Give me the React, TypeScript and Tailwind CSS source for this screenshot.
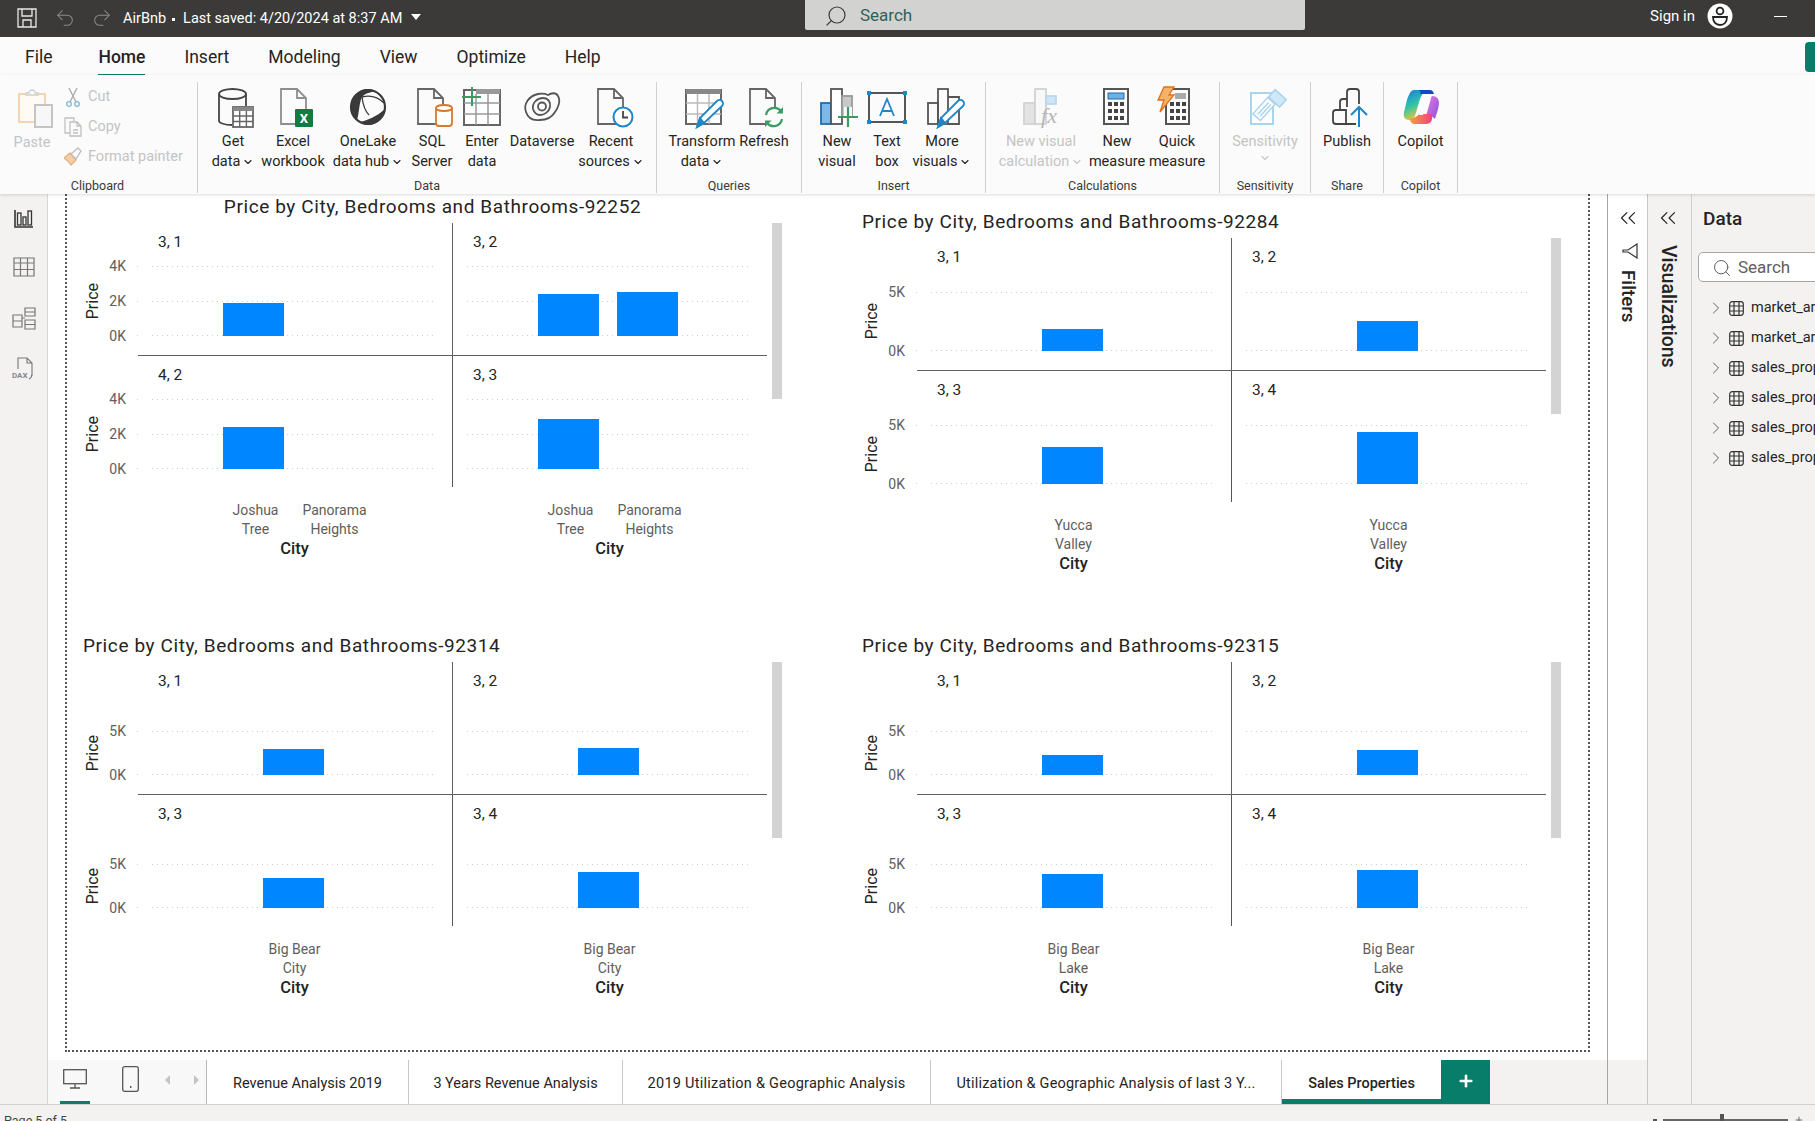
import React from 'react';
import { ChevronDown, ChevronRight, ChevronsLeft, Plus, Redo2, Search, Undo2 } from 'lucide-react';

const ui = "font-['Roboto','Liberation_Sans',sans-serif]";
const din = "font-['Roboto','Liberation_Sans',sans-serif]";

const S = ({ children }: { children: React.ReactNode }) => (
  <svg viewBox="0 0 40 40" className="h-[42px] w-[40px] overflow-visible" fill="none" strokeWidth="1.8">
    {children}
  </svg>
);

const Doc = ({ x = 0, c = '#666' }: { x?: number; c?: string }) => (
  <path transform={`translate(${x} 0)`} d="M8 2h16l9 9v26H8zM24 2v9h9" stroke={c} />
);

const Pencil = ({ x, y }: { x: number; y: number }) => (
  <g transform={`translate(${x} ${y})`}>
    <path d="M0 0l3-9L20-26a3.5 3.5 0 0 1 5 5L7-4z" fill="#fff" stroke="#1f86c8" />
    <path d="M0 0l3-9 4 5z" fill="#1f86c8" stroke="#1f86c8" />
  </g>
);

const GetDataIcon = () => (
  <S>
    <path d="M6 7v27c0 2 6 4 13 4M33 7v12" stroke="#444" />
    <ellipse cx="19.5" cy="7" rx="13.5" ry="5" stroke="#444" />
    <g stroke="#666" strokeWidth="1.4">
      <rect x="20" y="20" width="20" height="20" fill="#fff" strokeWidth="1.8" />
      <path d="M26.7 24v16M33.4 24v16M20 29h20M20 34.500h20" />
    </g>
    <rect x="20" y="20" width="20" height="4" fill="#888" />
  </S>
);

const ExcelIcon = () => (
  <S>
    <Doc c="#8e8e8e" />
    <rect x="22" y="22" width="18" height="18" rx="1" fill="#107c41" />
    <text x="31" y="36" textAnchor="middle" fill="#fff" fontSize="13" fontWeight="700" fontFamily="Roboto">X</text>
  </S>
);

const OneLakeIcon = () => (
  <S>
    <circle cx="20" cy="20" r="17" stroke="#3a3a3a" strokeWidth="2.2" />
    <path d="M18 2C8 4 3 12 3 20c0 6 2 10 6 13 2-5 2-17 5-23 3-4 8-4 12-6-2-2-6-2-8-2z" fill="#3a3a3a" />
    <path d="M12 35c8-2 16-5 25-13-1 8-9 16-17 16-3 0-6-1-8-3z" fill="#3a3a3a" />
    <path d="M14 10c1 8 3 14 7 18M14 10c8-2 16 0 22 6" stroke="#3a3a3a" strokeWidth="1.3" />
  </S>
);

const SqlIcon = () => (
  <S>
    <Doc x={-2} />
    <rect x="24" y="20" width="16" height="19" rx="3" fill="#fff" stroke="#d9792b" />
    <ellipse cx="32" cy="21" rx="8" ry="3" fill="#fff" stroke="#d9792b" />
  </S>
);

const EnterDataIcon = () => (
  <S>
    <rect x="2" y="3" width="36" height="35" fill="#fff" stroke="#666" strokeWidth="2" />
    <path d="M14 7v31M26 7v31M2 16h36M2 27h36" stroke="#999" strokeWidth="1.5" />
    <rect x="14" y="2" width="24" height="5" fill="#999" />
    <path d="M10 0v19M0 10h19" stroke="#3d9a63" strokeWidth="2" />
  </S>
);

const DataverseIcon = () => (
  <S>
    <path d="M4 25C1 17 7 9 16 7c5-1 8 0 10 1 3-2 8-3 10 1 3 5 0 12-3 16-3 5-9 8-15 8-7 1-12-2-14-8z" stroke="#555" />
    <path d="M11 22c-1-6 4-11 10-11 5 0 8 4 7 9-1 5-6 8-10 8-4 0-6-3-7-6z" stroke="#555" />
    <circle cx="20" cy="19.500" r="4" stroke="#555" />
  </S>
);

const RecentIcon = () => (
  <S>
    <Doc x={-1} />
    <circle cx="32" cy="30" r="9.500" fill="#fff" stroke="#1f86c8" strokeWidth="2" />
    <path d="M32 24v6.500h5" stroke="#444" />
  </S>
);

const TransformIcon = () => (
  <S>
    <rect x="4" y="3" width="35" height="34" fill="#fff" stroke="#666" strokeWidth="2" />
    <path d="M15.500 7v30M27 7v30M4 16h35M4 27h35" stroke="#bbb" strokeWidth="1.5" />
    <rect x="4" y="2" width="35" height="5" fill="#888" />
    <Pencil x={15} y={40} />
  </S>
);

const RefreshIcon = () => (
  <S>
    <Doc x={-2} />
    <circle cx="30" cy="30" r="10" fill="#fbfbfb" />
    <path d="M22 28a8.500 8.500 0 0 1 15-4M38 32a8.500 8.500 0 0 1-15 4" stroke="#3d9a63" strokeWidth="2.2" />
    <path d="M39 20v6.500h-6.500zM21 40v-6.500h6.500z" fill="#3d9a63" />
  </S>
);

const NewVisualIcon = () => (
  <S>
    <rect x="4" y="16" width="10" height="21" fill="#7cb9e8" stroke="#1d6fb0" />
    <rect x="14" y="2" width="11" height="35" fill="#fff" stroke="#555" />
    <rect x="25" y="9" width="10" height="21" fill="#c9c9c9" stroke="#999" />
    <rect x="27" y="20" width="8" height="20" fill="#fbfbfb" />
    <path d="M31 20v20M21 30h20" stroke="#3d9a63" strokeWidth="2.200" />
  </S>
);

const TextBoxIcon = () => (
  <S>
    <rect x="2" y="6" width="36" height="29" stroke="#444" />
    {[[0, 4], [36, 4], [0, 33], [36, 33]].map(([x, y]) => (
      <rect key={`${x}-${y}`} x={x} y={y} width="4" height="4" fill="#1f86c8" />
    ))}
    <path d="M13 29l7-17 7 17M15.500 24h9" stroke="#1f86c8" />
  </S>
);

const MoreVisualsIcon = () => (
  <S>
    <rect x="6" y="16" width="10" height="21" stroke="#555" />
    <rect x="16" y="2" width="10" height="35" stroke="#555" />
    <path d="M26 10h11v27H26" stroke="#555" />
    <Pencil x={16} y={40} />
  </S>
);

const VisualCalcIcon = () => (
  <S>
    <rect x="3" y="16" width="11" height="21" fill="#e3e3e3" stroke="#d2d2d2" />
    <rect x="14" y="2" width="11" height="35" fill="#f8f8f8" stroke="#d2d2d2" />
    <rect x="25" y="9" width="10" height="8" fill="#cfe4f5" stroke="#bcd7ee" />
    <text x="28" y="36" textAnchor="middle" fill="#b5b5b5" fontSize="22" fontStyle="italic" fontFamily="Liberation Serif">fx</text>
  </S>
);

const Keys = ({ x, y }: { x: number; y: number }) => (
  <g fill="#444">
    {[0, 7, 14].map((dy) =>
      [0, 6, 12].map((dx) => <rect key={`${dx}-${dy}`} x={x + dx} y={y + dy} width="4" height="4" />)
    )}
  </g>
);

const MeasureIcon = () => (
  <S>
    <rect x="7" y="2" width="24" height="35" stroke="#555" strokeWidth="2" />
    <rect x="11" y="6" width="16" height="6" fill="#6db0e4" stroke="#1f6fb0" strokeWidth="1" />
    <Keys x={11} y={15} />
  </S>
);

const QuickMeasureIcon = () => (
  <S>
    <rect x="9" y="2" width="23" height="35" stroke="#555" strokeWidth="2" />
    <rect x="18" y="6" width="11" height="6" fill="#aaa" />
    <Keys x={13} y={15} />
    <path d="M7 0h10l-5 8h5L3 25l4-12H1z" fill="#f5b26b" stroke="#e0701a" strokeWidth="1.300" />
  </S>
);

const SensitivityIcon = () => (
  <S>
    <path d="M6 6h22v31H6z" stroke="#a9d4ee" fill="#fff" strokeWidth="2" />
    <g transform="rotate(-48 19 22)" stroke="#a9d4ee" strokeWidth="1.500" fill="#fff">
      <rect x="8" y="17" width="22" height="10" />
      <path d="M11 21h16M11 24h16" />
    </g>
    <g transform="rotate(-48 32 11)" stroke="#a9d4ee" strokeWidth="1.500" fill="#cfe8f7">
      <rect x="27" y="4" width="10" height="15" />
    </g>
  </S>
);

const PublishIcon = () => (
  <S>
    <path d="M9 37c-2 0-3-1-3-3V26c0-2 1-3 3-3h10v14zM19 37h10" stroke="#444" />
    <path d="M13 23v-8c0-2 1-3 3-3h4" stroke="#444" />
    <path d="M20 20V5c0-2 1-3 3-3h6c2 0 3 1 3 3v12" stroke="#444" />
    <path d="M32 40V20M24 28l8-8 8 8" stroke="#1f86c8" strokeWidth="2" />
  </S>
);

const CopilotIcon = () => (
  <svg viewBox="0 0 40 40" className="h-[42px] w-[40px] overflow-visible">
    <defs>
      <linearGradient id="cpa" x1="0" y1="0" x2="0.4" y2="1">
        <stop offset="0" stopColor="#1b74e4" />
        <stop offset="0.55" stopColor="#2fc4a8" />
        <stop offset="1" stopColor="#e8c93a" />
      </linearGradient>
      <linearGradient id="cpb" x1="0" y1="0" x2="1" y2="1">
        <stop offset="0" stopColor="#e77be0" />
        <stop offset="1" stopColor="#8a4fe0" />
      </linearGradient>
      <linearGradient id="cpc" x1="0" y1="0" x2="1" y2="0">
        <stop offset="0" stopColor="#f6a13c" />
        <stop offset="1" stopColor="#f0427a" />
      </linearGradient>
    </defs>
    <g transform="translate(1 0)">
      <path d="M12 3h14c-4 1-6 4-8 9l-5 17c-1 3-3 4-6 4-4 0-6-3-5-8l3-12C7 7 9 3 12 3z" fill="url(#cpa)" />
      <path d="M15 3h13c2 0 3 1 4 4l-14 0c1-2 0-4-3-4z" fill="#1447c8" />
      <path d="M30 9c5 0 7 3 7 7 0 5-3 12-4 16-2-2-3-3-6-3h-3l4-14c1-3 1-5 2-6z" fill="url(#cpb)" />
      <path d="M7 31c4 1 8-1 10-4h13c1 6-1 10-6 10H12c-2 0-4-3-5-6z" fill="url(#cpc)" />
      <path d="M22 12h4l-5 16h-4z" fill="#fbfbfb" />
    </g>
  </svg>
);

type Item = { w: string; icon: React.ReactNode; a: string; b?: string; caret?: boolean; off?: boolean };

const RibbonItem = ({ w, icon, a, b, caret, off }: Item) => (
  <div className={`${w} flex shrink-0 flex-col items-center pt-[5px] text-[14.5px] leading-[20px] ${off ? 'text-[#c4c4c4]' : 'text-[#252423]'}`}>
    <div className="-mt-[1px] flex h-[46px] items-start">{icon}</div>
    <div className="whitespace-nowrap">{a}</div>
    <div className="flex items-center gap-[2px] whitespace-nowrap">
      {b}
      {caret && <ChevronDown size={12} strokeWidth={2.2} />}
    </div>
  </div>
);

const Group = ({ w, pl, label, children }: { w: string; pl: string; label: string; children: React.ReactNode }) => (
  <div className={`${w} flex h-[111px] shrink-0 flex-col border-r border-[#d2d0ce]`}>
    <div className={`${pl} flex flex-1`}>{children}</div>
    <div className="h-[14px] text-center text-[12.5px] leading-[14px] text-[#3b3a39]">{label}</div>
  </div>
);

const Ribbon = () => (
  <div className="relative z-10 flex h-[119px] shrink-0 items-start bg-[#fbfbfb] pt-[7px] shadow-[0_1px_3px_rgba(0,0,0,0.15)]">
    <div className="flex h-[111px] w-[198px] shrink-0 flex-col border-r border-[#d2d0ce]">
      <div className="flex flex-1 text-[14.5px] leading-[20px] text-[#c4c4c4]">
        <div className="flex w-[64px] flex-col items-center pt-[6px]">
          <svg viewBox="0 0 36 40" className="ml-[6px] h-[40px] w-[36px]" fill="none" strokeWidth="2">
            <rect x="2" y="6" width="26" height="28" fill="#fffaf3" stroke="#f2d6b3" />
            <path d="M9 7V5h3a3 3 0 0 1 6 0h3v2z" fill="#fbfbfb" stroke="#cfcfcf" strokeWidth="1.300" />
            <rect x="18" y="17" width="17" height="22" fill="#f7f7f7" stroke="#c4c4c4" />
          </svg>
          <div className="mt-[5px]">Paste</div>
        </div>
        <div className="flex flex-col gap-[10px] pt-[5px]">
          <div className="flex h-[20px] items-center gap-[6px]">
            <svg viewBox="0 0 18 20" className="h-[20px] w-[18px]" fill="none" strokeWidth="1.300">
              <path d="M6 15L13 1M12 15L5 1" stroke="#a8a8a8" />
              <circle cx="5" cy="17" r="2.300" stroke="#7fb6da" />
              <circle cx="13" cy="17" r="2.300" stroke="#7fb6da" />
            </svg>
            Cut
          </div>
          <div className="flex h-[20px] items-center gap-[6px]">
            <svg viewBox="0 0 18 20" className="h-[20px] w-[18px]" fill="#fbfbfb" stroke="#c0c0c0" strokeWidth="1.300">
              <path d="M1 1h9v15H1z" />
              <path d="M6 5h7l4 4v10H6zM13 5v4h4M9 13h5M9 16h5" />
            </svg>
            Copy
          </div>
          <div className="flex h-[20px] items-center gap-[6px] whitespace-nowrap">
            <svg viewBox="0 0 18 20" className="h-[20px] w-[18px]" strokeWidth="1.300">
              <path d="M0 11l6-5 6 7-5 5c-2-3-4-5-7-7z" fill="#f3cfa8" stroke="#e6b080" />
              <path d="M7 7l7-6 3 3-5 8z" fill="#fbfbfb" stroke="#bdbdbd" />
            </svg>
            Format painter
          </div>
        </div>
      </div>
      <div className="h-[14px] pr-[2px] text-center text-[12.5px] leading-[14px] text-[#3b3a39]">Clipboard</div>
    </div>
    <Group w="w-[459px]" pl="pl-[7px]" label="Data">
      <RibbonItem w="w-[56px]" icon={<GetDataIcon />} a="Get" b="data" caret />
      <RibbonItem w="w-[64px]" icon={<ExcelIcon />} a="Excel" b="workbook" />
      <RibbonItem w="w-[86px]" icon={<OneLakeIcon />} a="OneLake" b="data hub" caret />
      <RibbonItem w="w-[42px]" icon={<SqlIcon />} a="SQL" b="Server" />
      <RibbonItem w="w-[58px]" icon={<EnterDataIcon />} a="Enter" b="data" />
      <RibbonItem w="w-[62px]" icon={<DataverseIcon />} a="Dataverse" />
      <RibbonItem w="w-[76px]" icon={<RecentIcon />} a="Recent" b="sources" caret />
    </Group>
    <Group w="w-[145px]" pl="pl-[5px]" label="Queries">
      <RibbonItem w="w-[80px]" icon={<TransformIcon />} a="Transform" b="data" caret />
      <RibbonItem w="w-[44px]" icon={<RefreshIcon />} a="Refresh" />
    </Group>
    <Group w="w-[184px]" pl="pl-[8px]" label="Insert">
      <RibbonItem w="w-[54px]" icon={<NewVisualIcon />} a="New" b="visual" />
      <RibbonItem w="w-[46px]" icon={<TextBoxIcon />} a="Text" b="box" />
      <RibbonItem w="w-[64px]" icon={<MoreVisualsIcon />} a="More" b="visuals" caret />
    </Group>
    <Group w="w-[234px]" pl="pl-[8px]" label="Calculations">
      <RibbonItem w="w-[94px]" icon={<VisualCalcIcon />} a="New visual" b="calculation" caret off />
      <RibbonItem w="w-[58px]" icon={<MeasureIcon />} a="New" b="measure" />
      <RibbonItem w="w-[62px]" icon={<QuickMeasureIcon />} a="Quick" b="measure" />
    </Group>
    <Group w="w-[91px]" pl="" label="Sensitivity">
      <RibbonItem w="w-[90px]" icon={<SensitivityIcon />} a="Sensitivity" caret off />
    </Group>
    <Group w="w-[73px]" pl="" label="Share">
      <RibbonItem w="w-[72px]" icon={<PublishIcon />} a="Publish" />
    </Group>
    <Group w="w-[74px]" pl="" label="Copilot">
      <RibbonItem w="w-[73px]" icon={<CopilotIcon />} a="Copilot" />
    </Group>
  </div>
);

const TitleBar = () => (
  <div className="flex h-[37px] shrink-0 bg-[#3b3a39] text-white">
    <div className="flex w-[805px] items-center pt-[1px] text-[14.5px]">
      <svg viewBox="0 0 20 20" className="mb-[2px] ml-[17px] h-[20px] w-[20px]" fill="none" stroke="#e8e8e8" strokeWidth="1.3">
        <path d="M1 1h18v18H1zM5 1v7h10V1M6 19v-7h8v7" />
      </svg>
      <Undo2 size={22} strokeWidth={1.1} className="mb-[2px] ml-[17px] text-[#8c8c8c]" />
      <Redo2 size={22} strokeWidth={1.1} className="mb-[2px] ml-[15px] text-[#8c8c8c]" />
      <span className="ml-[10px]">AirBnb</span>
      <span className="ml-[6px] h-[3px] w-[3px] bg-white" />
      <span className="ml-[8px]">Last saved: 4/20/2024 at 8:37 AM</span>
      <span className="ml-[9px] mb-[4px] h-0 w-0 border-x-[5px] border-t-[6px] border-x-transparent border-t-white" />
    </div>
    <div className="flex h-[30px] w-[500px] items-center rounded-b-[2px] bg-[#d2d2d0] pl-[19px] pt-[1px] text-[17px] text-[#2d625c]">
      <Search size={24} strokeWidth={1.2} className="-scale-x-100 text-[#3b3a39]" />
      <span className="ml-[12px]">Search</span>
    </div>
    <div className="flex flex-1 items-center justify-end pb-[4px] text-[15px]">
      <span>Sign in</span>
      <svg viewBox="0 0 26 26" className="mb-[1px] ml-[12px] h-[26px] w-[26px]">
        <circle cx="13" cy="13" r="12.5" fill="#fff" />
        <circle cx="13" cy="8" r="3.4" fill="none" stroke="#222" strokeWidth="1.8" />
        <path d="M6 14h14c0 5-3 8-7 8s-7-3-7-8z" fill="none" stroke="#222" strokeWidth="1.8" />
      </svg>
      <span className="ml-[41px] mr-[28px] h-px w-[13px] bg-white" />
    </div>
  </div>
);

const TabRow = () => (
  <div className="flex h-[38px] shrink-0 items-start bg-[#fbfbfb] pl-[25px] text-[#252423]">
    <div className="flex flex-1 gap-[39px] pt-[8px] text-[17.5px] leading-[24px]">
      <span className="mr-[7px]">File</span>
      <span className="relative font-medium">
        Home
        <span className="absolute -bottom-[8px] left-0 h-[3px] w-full bg-[#077d6a]" />
      </span>
      <span>Insert</span>
      <span>Modeling</span>
      <span>View</span>
      <span>Optimize</span>
      <span>Help</span>
    </div>
    <div className="mt-[5px] h-[30px] w-[10px] rounded-l-[4px] bg-[#077d6a]" />
  </div>
);

const Rail = () => (
  <div className="flex w-[48px] shrink-0 flex-col items-center border-r border-[#d9d7d5] bg-[#f3f2f1] pt-[15px]">
    <svg viewBox="0 0 20 20" className="h-[20px] w-[20px]" fill="none" stroke="#333" strokeWidth="1.3">
      <path d="M1 1v17h18" strokeWidth="1.6" />
      <rect x="3.5" y="4" width="3.5" height="12" />
      <rect x="9" y="8" width="3" height="8" />
      <rect x="14" y="2" width="3.5" height="14" />
    </svg>
    <svg viewBox="0 0 22 20" className="mt-[28px] h-[20px] w-[22px]" fill="none" stroke="#777" strokeWidth="1.2">
      <path d="M1 1h20v18H1zM1 6h20M1 12.5h20M7.5 1v18M14.5 1v18" />
    </svg>
    <svg viewBox="0 0 24 24" className="mt-[29px] h-[24px] w-[24px]" fill="none" stroke="#777" strokeWidth="1.2">
      <path d="M1 9h9v12H1zM1 15h9M13 2h10v8H13zM13 6h10M13 14h10v9H13zM13 18.5h10M10 12h3" />
    </svg>
    <svg viewBox="0 0 24 24" className="mt-[26px] h-[24px] w-[24px]" fill="none" stroke="#777" strokeWidth="1.1">
      <path d="M6 13V2h9l5 5v13M15 2v5h5M20 18c0 3-1 4-3 5" />
      <text x="0" y="22" fontSize="8" fontWeight="700" fill="#888" stroke="none" fontFamily="Roboto">DAX</text>
    </svg>
  </div>
);

type PanelData = { label: string; bars: number[] };

const Panel = ({
  p,
  plot,
  lines,
  slot,
  bottom,
  left,
}: {
  p: PanelData;
  plot: string;
  lines: number;
  slot: string;
  bottom?: boolean;
  left?: boolean;
}) => (
  <div
    className={`flex shrink-0 flex-col pl-[14px] ${left ? 'w-[315px] border-r border-[#555]' : 'w-[314px]'} ${
      bottom ? 'h-[131px] pb-[18px]' : 'h-[133px] border-b border-[#606060] pb-[19px]'
    }`}
  >
    <div className={`pl-[6px] pt-[9px] text-[15.5px] leading-[20px] text-[#252423] ${din}`}>{p.label}</div>
    <div className={`${plot} relative mt-auto flex w-[281px] items-end ${slot}`}>
      <div className="absolute inset-0 flex flex-col justify-between">
        {Array.from({ length: lines }, (_, i) => (
          <div key={i} className="relative h-px bg-[repeating-linear-gradient(90deg,#cfcfcf_0_1px,transparent_1px_5px)]">
            {left && <span className="absolute -left-[15px] top-0 h-px w-px bg-[#cfcfcf]" />}
          </div>
        ))}
      </div>
      {p.bars.map((h, i) => (
        <div key={i} className="relative w-[61px] bg-[#0086ff]" style={{ height: h }} />
      ))}
    </div>
  </div>
);

const Axis = ({ ticks, col, pb }: { ticks: string[]; col: string; pb: string }) => (
  <div className={`flex w-[55px] shrink-0 items-end ${pb}`}>
    <div className={`${col} flex w-[43px] items-center`}>
      <div className={`[writing-mode:vertical-rl] rotate-180 w-[20px] text-[16px] leading-[20px] text-[#252423] ${din}`}>Price</div>
      <div className={`flex h-full flex-1 flex-col items-end justify-between text-[14px] leading-[16px] text-[#605e5c] ${din}`}>
        {ticks.map((t) => (
          <span key={t}>{t}</span>
        ))}
      </div>
    </div>
  </div>
);

type ChartData = {
  zip: string;
  center?: boolean;
  ticks: string[];
  short?: boolean;
  panels: PanelData[];
  cities: string[][];
};

const Chart = ({ c, className }: { c: ChartData; className: string }) => {
  const lines = c.ticks.length;
  const plot = lines === 3 ? 'h-[70px]' : c.short ? 'h-[44px]' : 'h-[59px]';
  const col = lines === 3 ? 'h-[86px]' : c.short ? 'h-[60px]' : 'h-[75px]';
  const slot = c.cities.length > 1 ? 'pl-[71px] gap-[18px]' : 'pl-[111px]';
  return (
    <div className={className}>
      <div className={`h-[24px] w-[699px] pt-[1px] text-[19px] leading-[22px] tracking-[0.6px] text-[#252423] ${din} ${c.center ? 'text-center' : ''}`}>
        Price by City, Bedrooms and Bathrooms-{c.zip}
      </div>
      <div className="mt-[4px] flex">
        <div className="w-[684px] shrink-0">
          <div className="flex">
            <Axis ticks={c.ticks} col={col} pb="pb-[12px]" />
            <Panel p={c.panels[0]} plot={plot} lines={lines} slot={slot} left />
            <Panel p={c.panels[1]} plot={plot} lines={lines} slot={slot} />
          </div>
          <div className="flex">
            <Axis ticks={c.ticks} col={col} pb="pb-[10px]" />
            <Panel p={c.panels[2]} plot={plot} lines={lines} slot={slot} bottom left />
            <Panel p={c.panels[3]} plot={plot} lines={lines} slot={slot} bottom />
          </div>
          <div className={`ml-[55px] flex pt-[14px] text-center text-[14px] leading-[19px] ${din}`}>
            {[0, 1].map((i) => (
              <div key={i} className="w-[315px] shrink-0 pl-[14px]">
                <div className="w-[285px]">
                  <div className={`flex text-[#605e5c] ${c.cities.length > 1 ? 'pl-[64px]' : 'justify-center'}`}>
                    {c.cities.map((city) => (
                      <div key={city[0]} className={c.cities.length > 1 ? 'w-[79px] shrink-0' : ''}>
                        {city.map((l) => (
                          <div key={l} className="whitespace-nowrap">{l}</div>
                        ))}
                      </div>
                    ))}
                  </div>
                  <div className="text-[16.5px] font-medium text-[#252423]">City</div>
                </div>
              </div>
            ))}
          </div>
        </div>
        <div className="ml-[5px] h-[176px] w-[10px] shrink-0 bg-[#d3d3d3]" />
      </div>
    </div>
  );
};

const charts: ChartData[] = [
  {
    zip: '92252',
    center: true,
    ticks: ['4K', '2K', '0K'],
    cities: [['Joshua', 'Tree'], ['Panorama', 'Heights']],
    panels: [
      { label: '3, 1', bars: [33] },
      { label: '3, 2', bars: [42, 44] },
      { label: '4, 2', bars: [42] },
      { label: '3, 3', bars: [50] },
    ],
  },
  {
    zip: '92284',
    ticks: ['5K', '0K'],
    cities: [['Yucca', 'Valley']],
    panels: [
      { label: '3, 1', bars: [22] },
      { label: '3, 2', bars: [30] },
      { label: '3, 3', bars: [37] },
      { label: '3, 4', bars: [52] },
    ],
  },
  {
    zip: '92314',
    short: true,
    ticks: ['5K', '0K'],
    cities: [['Big Bear', 'City']],
    panels: [
      { label: '3, 1', bars: [26] },
      { label: '3, 2', bars: [27] },
      { label: '3, 3', bars: [30] },
      { label: '3, 4', bars: [36] },
    ],
  },
  {
    zip: '92315',
    short: true,
    ticks: ['5K', '0K'],
    cities: [['Big Bear', 'Lake']],
    panels: [
      { label: '3, 1', bars: [20] },
      { label: '3, 2', bars: [25] },
      { label: '3, 3', bars: [34] },
      { label: '3, 4', bars: [38] },
    ],
  },
];

const PageTabs = () => (
  <div className="flex h-[44px] shrink-0 bg-[#f3f2f1] text-[14.5px] text-[#252423]">
    <div className="flex w-[159px] shrink-0 items-start border-r border-[#b8b8b8] bg-[#f8f8f8] pt-[6px]">
      <div className="ml-[12px] flex h-[38px] w-[30px] flex-col items-center border-b-[3px] border-[#077d6a]">
        <svg viewBox="0 0 24 20" className="mt-[3px] h-[20px] w-[24px]" fill="none" stroke="#555" strokeWidth="1.3">
          <rect x="0.7" y="0.7" width="22.6" height="14" />
          <path d="M12 15v4M7 19h10" />
        </svg>
      </div>
      <svg viewBox="0 0 17 26" className="ml-[32px] h-[26px] w-[17px]" fill="none" stroke="#555" strokeWidth="1.3">
        <rect x="0.7" y="0.7" width="15.6" height="24.6" rx="2" />
        <path d="M8 21h1.4" strokeWidth="1.8" />
      </svg>
      <span className="ml-[26px] mt-[9px] h-0 w-0 border-y-[5px] border-r-[5px] border-y-transparent border-r-[#c4c4c4]" />
      <span className="ml-[24px] mt-[9px] h-0 w-0 border-y-[5px] border-l-[5px] border-y-transparent border-l-[#c4c4c4]" />
    </div>
    {[
      ['w-[202px]', 'Revenue Analysis 2019', ''],
      ['w-[214px]', '3 Years Revenue Analysis', ''],
      ['w-[308px]', '2019 Utilization & Geographic Analysis', 'tracking-[0.25px]'],
      ['w-[351px]', 'Utilization & Geographic Analysis of last 3 Y...', 'tracking-[0.18px]'],
    ].map(([w, t, tr]) => (
      <div key={t} className={`${w} ${tr} flex shrink-0 items-center justify-center whitespace-nowrap border-r border-[#c8c6c4] bg-white pt-[3px]`}>
        {t}
      </div>
    ))}
    <div className="flex w-[159px] shrink-0 items-center justify-center border-b-[5px] border-[#077d6a] bg-white pt-[8px] font-medium">
      Sales Properties
    </div>
    <div className="flex w-[49px] shrink-0 items-center justify-center bg-[#077d6a] pb-[2px]">
      <Plus size={18} strokeWidth={3.5} className="text-white" />
    </div>
  </div>
);

const DataPane = () => (
  <div className="w-[123px] shrink-0 overflow-hidden bg-[#f3f2f1] text-[#252423]">
    <div className="pl-[11px] pt-[12px] text-[19px] font-medium leading-[26px]">Data</div>
    <div className="ml-[6px] mt-[20px] flex h-[30px] w-[140px] items-center rounded-l-[5px] border border-[#a8a6a4] bg-white pl-[13px] pt-[1px] text-[17px] text-[#605e5c]">
      <Search size={20} strokeWidth={1.2} />
      <span className="ml-[6px]">Search</span>
    </div>
    <div className="mt-[11px] flex flex-col">
      {['market_area_1', 'market_area_2', 'sales_properties_1', 'sales_properties_2', 'sales_properties_3', 'sales_properties_4'].map((t) => (
        <div key={t} className="flex h-[30px] items-center whitespace-nowrap pl-[15px] text-[14.5px]">
          <ChevronRight size={20} strokeWidth={1} className="-ml-[1px] shrink-0 text-[#444]" />
          <svg viewBox="0 0 15 15" className="ml-[3px] h-[15px] w-[15px] shrink-0" fill="none" stroke="#333" strokeWidth="1.2">
            <rect x="0.7" y="0.7" width="13.6" height="13.6" rx="2.5" />
            <path d="M5 1v13M10 1v13M1 5h13M1 10h13" />
          </svg>
          <span className="ml-[7px]">{t}</span>
        </div>
      ))}
    </div>
  </div>
);

export default function App() {
  return (
    <div className={`flex h-screen w-screen flex-col overflow-hidden bg-[#f3f2f1] ${ui}`}>
      <TitleBar />
      <TabRow />
      <Ribbon />
      <div className="flex min-h-0 flex-1">
        <Rail />
        <div className="flex w-[1560px] shrink-0 flex-col border-r border-[#a8a6a4] bg-white">
          <div className="min-h-0 flex-1 px-[17px] pb-[8px]">
            <div className={`grid h-full grid-cols-[779px_1fr] grid-rows-[439px_1fr] border-x-2 border-b-2 border-dotted border-[#555] pl-[16px] pt-[1px] ${din}`}>
              <Chart c={charts[0]} className="" />
              <Chart c={charts[1]} className="pt-[15px]" />
              <Chart c={charts[2]} className="" />
              <Chart c={charts[3]} className="" />
            </div>
          </div>
          <PageTabs />
        </div>
        <div className="flex w-[40px] shrink-0 flex-col border-r border-[#c8c6c4]">
          <div className="flex flex-1 flex-col items-center bg-white pt-[11px] text-[#252423]">
            <ChevronsLeft size={26} strokeWidth={1.1} />
            <svg viewBox="0 0 16 16" className="ml-[4px] mt-[12px] h-[16px] w-[16px]" fill="none" stroke="#333" strokeWidth="1.2">
              <path d="M15 1v14L6 9H1V7h5z" />
            </svg>
            <div className="mt-[11px] text-[18.8px] font-medium leading-[20px] [writing-mode:vertical-rl]">Filters</div>
          </div>
          <div className="h-[44px] shrink-0" />
        </div>
        <div className="flex w-[44px] shrink-0 flex-col items-center border-r border-[#d2d0ce] pr-[4px] pt-[11px] text-[#252423]">
          <ChevronsLeft size={26} strokeWidth={1.1} />
          <div className="mt-[14px] text-[19.5px] font-medium leading-[20px] [writing-mode:vertical-rl]">Visualizations</div>
        </div>
        <DataPane />
      </div>
      <div className="flex h-[17px] shrink-0 items-start border-t border-[#d2d0ce] bg-[#f3f2f1] pl-[4px]">
        <span className="pt-[9px] text-[12.5px] leading-[14px] text-[#444]">Page 5 of 5</span>
        <div className="ml-auto mr-[11px] mt-[10px] flex items-center text-[#555]">
          <span className="h-[2px] w-[4px] bg-[#555]" />
          <span className="relative ml-[6px] h-[2px] w-[125px] bg-[#666]">
            <span className="absolute left-[57px] -top-[5px] h-[10px] w-[4px] bg-[#555]" />
          </span>
          <Plus size={10} strokeWidth={2} className="ml-[6px]" />
        </div>
      </div>
    </div>
  );
}
